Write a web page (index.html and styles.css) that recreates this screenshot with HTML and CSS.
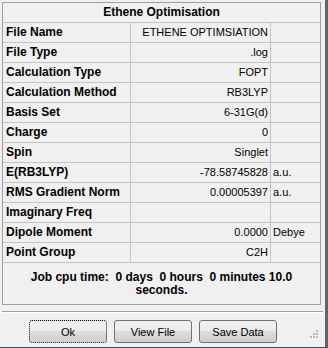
FILE: index.html
```html
<!DOCTYPE html>
<html lang="en">

<head>
    <meta charset="UTF-8">
    <title>Ethene Optimisation</title>
    <link rel="stylesheet" href="styles.css">
</head>

<body>
    <div class="window">
        <div class="panel">
            <div class="grid">
                <div class="title">Ethene Optimisation</div>

                <div class="cell label">File Name</div>
                <div class="cell value">ETHENE OPTIMSIATION</div>
                <div class="cell unit"></div>

                <div class="cell label">File Type</div>
                <div class="cell value">.log</div>
                <div class="cell unit"></div>

                <div class="cell label">Calculation Type</div>
                <div class="cell value">FOPT</div>
                <div class="cell unit"></div>

                <div class="cell label">Calculation Method</div>
                <div class="cell value">RB3LYP</div>
                <div class="cell unit"></div>

                <div class="cell label">Basis Set</div>
                <div class="cell value">6-31G(d)</div>
                <div class="cell unit"></div>

                <div class="cell label">Charge</div>
                <div class="cell value">0</div>
                <div class="cell unit"></div>

                <div class="cell label">Spin</div>
                <div class="cell value">Singlet</div>
                <div class="cell unit"></div>

                <div class="cell label">E(RB3LYP)</div>
                <div class="cell value">-78.58745828</div>
                <div class="cell unit">a.u.</div>

                <div class="cell label">RMS Gradient Norm</div>
                <div class="cell value">0.00005397</div>
                <div class="cell unit">a.u.</div>

                <div class="cell label">Imaginary Freq</div>
                <div class="cell value"></div>
                <div class="cell unit"></div>

                <div class="cell label">Dipole Moment</div>
                <div class="cell value">0.0000</div>
                <div class="cell unit">Debye</div>

                <div class="cell label">Point Group</div>
                <div class="cell value">C2H</div>
                <div class="cell unit"></div>
            </div>

            <div class="cpu">Job cpu time:&nbsp; 0 days&nbsp; 0 hours&nbsp; 0 minutes 10.0 seconds.</div>
        </div>

        <div class="separator"></div>

        <div class="actions">
            <button class="btn btn-default">Ok</button>
            <button class="btn">View File</button>
            <button class="btn">Save Data</button>
        </div>

        <svg class="grip" width="10" height="10" viewBox="0 0 10 10">
            <rect x="8" y="0" width="2" height="2" fill="#b8b8b8" />
            <rect x="5" y="3" width="2" height="2" fill="#b8b8b8" />
            <rect x="8" y="3" width="2" height="2" fill="#b8b8b8" />
            <rect x="2" y="6" width="2" height="2" fill="#b8b8b8" />
            <rect x="5" y="6" width="2" height="2" fill="#b8b8b8" />
            <rect x="8" y="6" width="2" height="2" fill="#b8b8b8" />
        </svg>
    </div>
</body>

</html>
```

FILE: styles.css
```css
* {
    margin: 0;
    padding: 0;
    box-sizing: border-box;
}

body {
    font-family: "Liberation Sans", Arial, sans-serif;
    background: #f0f0f0;
    color: #000;
}

.window {
    position: relative;
    width: 328px;
    height: 348px;
    padding: 2px 0 0 2px;
    border-right: 3px solid #5a6571;
    border-bottom: 1px solid #3f4852;
}

.panel {
    width: 319px;
    border: 1px solid #a0a0a0;
}

.grid {
    display: grid;
    grid-template-columns: 128px 140px 49px;
}

.title {
    grid-column: 1 / -1;
    height: 20px;
    line-height: 19px;
    border-bottom: 1px solid #c4c4c4;
    text-align: center;
    font-size: 12px;
    font-weight: bold;
}

.cell {
    height: 20px;
    line-height: 19px;
    border-bottom: 1px solid #c4c4c4;
    white-space: nowrap;
    overflow: hidden;
}

.label {
    padding-left: 3px;
    border-right: 1px solid #c4c4c4;
    font-size: 12px;
    font-weight: bold;
}

.value {
    padding-right: 2px;
    border-right: 1px solid #c4c4c4;
    text-align: right;
    font-size: 11px;
}

.unit {
    padding-left: 2px;
    font-size: 11px;
}

.cpu {
    padding: 8px 12px 7px;
    line-height: 13px;
    text-align: center;
    font-size: 12px;
    font-weight: bold;
}

.separator {
    width: 321px;
    margin-top: 6px;
    border-top: 1px solid #a0a0a0;
    border-bottom: 1px solid #fff;
}

.actions {
    display: flex;
    gap: 7px;
    margin-top: 7px;
    padding-left: 27px;
}

.btn {
    width: 78px;
    height: 23px;
    border: 1px solid #707070;
    border-radius: 3px;
    background: linear-gradient(#f2f2f2 0%, #ebebeb 50%, #dddddd 50%, #cfcfcf 100%);
    font-family: "Liberation Sans", Arial, sans-serif;
    font-size: 11px;
    color: #000;
}

.btn-default {
    border: 1px dotted #111;
}

.grip {
    position: absolute;
    right: 7px;
    bottom: 7px;
}
```
